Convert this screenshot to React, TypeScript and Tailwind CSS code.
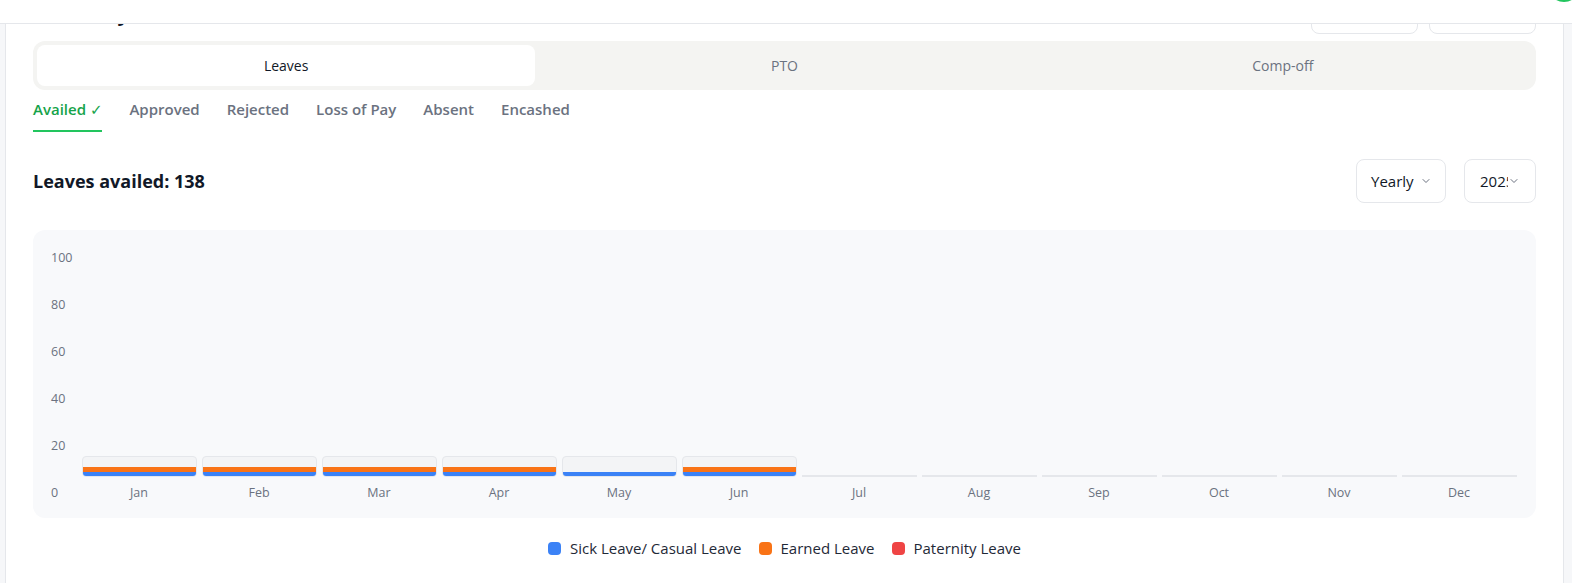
import React from "react";

const FONT = { fontFamily: '"Open Sans", "Noto Sans", "Liberation Sans", sans-serif' };

const months = [
  { m: "Jan", o: true, b: true },
  { m: "Feb", o: true, b: true },
  { m: "Mar", o: true, b: true },
  { m: "Apr", o: true, b: true },
  { m: "May", o: false, b: true },
  { m: "Jun", o: true, b: true },
  { m: "Jul", o: false, b: false },
  { m: "Aug", o: false, b: false },
  { m: "Sep", o: false, b: false },
  { m: "Oct", o: false, b: false },
  { m: "Nov", o: false, b: false },
  { m: "Dec", o: false, b: false },
];

function Chevron() {
  return (
    <svg width="12" height="12" viewBox="0 0 24 24" fill="none" stroke="#6b7280" strokeWidth="2" strokeLinecap="round" strokeLinejoin="round">
      <path d="m6 9 6 6 6-6" />
    </svg>
  );
}

export default function App() {
  return (
    <div className="w-[1572px] h-[583px] bg-white flex flex-col overflow-hidden text-[#111827]" style={FONT}>
      <header className="relative h-[24px] shrink-0 border-b border-[#e5e7eb] bg-white z-10">
        <div className="absolute right-[-8px] top-[-30px] w-[32px] h-[32px] rounded-full bg-[#22c55e]" />
      </header>
      <div className="flex flex-1 min-h-0">
        <div className="w-[6px] shrink-0 bg-[#f6f7f9] border-r border-[#e5e7eb]" />
        <main className="flex-1 min-w-0 overflow-hidden px-[27px]">
          <div className="-mt-[30px] h-10 flex items-center justify-between">
            <h1 className="text-[20px] font-bold leading-8">Summary</h1>
            <div className="flex gap-[11px]">
              <button className="w-[107px] h-10 rounded-lg border border-[#e5e7eb] bg-white" />
              <button className="w-[107px] h-10 rounded-lg border border-[#e5e7eb] bg-white" />
            </div>
          </div>

          <div className="mt-[7px] h-[49px] rounded-xl bg-[#f4f4f2] p-1 grid grid-cols-3">
            <div className="rounded-lg bg-white flex items-center justify-center text-[14px] text-[#111827]">Leaves</div>
            <div className="flex items-center justify-center text-[14px] text-[#6b7280]">PTO</div>
            <div className="flex items-center justify-center text-[14px] text-[#6b7280]">Comp-off</div>
          </div>

          <div className="mt-2 flex gap-[27px] text-[15px] font-semibold leading-[22px]">
            <div className="pb-[9px] border-b-2 border-[#22c55e] text-[#16a34a]">
              Availed <span className="font-normal text-[15px]" style={{ fontFamily: '"DejaVu Sans", sans-serif' }}>✓</span>
            </div>
            <div className="pb-[9px] text-[#6b7280]">Approved</div>
            <div className="pb-[9px] text-[#6b7280]">Rejected</div>
            <div className="pb-[9px] text-[#6b7280]">Loss of Pay</div>
            <div className="pb-[9px] text-[#6b7280]">Absent</div>
            <div className="pb-[9px] text-[#6b7280]">Encashed</div>
          </div>

          <div className="mt-[27px] flex items-center justify-between">
            <div className="text-[18px] font-bold">Leaves availed: 138</div>
            <div className="flex gap-[18px]">
              <div className="h-[44px] w-[90px] rounded-lg border border-[#e5e7eb] flex items-center pl-[14px] gap-[6px] text-[15px]">
                <span>Yearly</span>
                <Chevron />
              </div>
              <div className="h-[44px] w-[72px] rounded-lg border border-[#e5e7eb] flex items-center pl-[15px] text-[15px]">
                <span className="w-[28px] overflow-hidden whitespace-nowrap">2025</span>
                <Chevron />
              </div>
            </div>
          </div>

          <div className="mt-[27px] h-[288px] rounded-xl bg-[#f8f9fb] flex pt-[20px] pb-[17px] pl-[18px] pr-[17px]">
            <div className="w-[28px] shrink-0 flex flex-col justify-between text-[12.5px] leading-4 text-[#6b7280]">
              <span>100</span>
              <span>80</span>
              <span>60</span>
              <span>40</span>
              <span>20</span>
              <span>0</span>
            </div>
            <div className="flex-1 flex flex-col">
              <div className="flex-1 flex items-end">
                {months.map((d) => (
                  <div key={d.m} className="flex-1 px-[2.5px] flex flex-col justify-end">
                    {d.b ? (
                      <div className="h-[21px] rounded-[4px] border border-[#e5e7eb] bg-[#f3f4f6] overflow-hidden flex flex-col justify-end">
                        {d.o && <div className="h-[5px] bg-[#f97316]" />}
                        <div className="h-[4px] bg-[#3b82f6]" />
                      </div>
                    ) : (
                      <div className="h-[2px] bg-[#e5e7eb]" />
                    )}
                  </div>
                ))}
              </div>
              <div className="mt-2 flex h-4">
                {months.map((d) => (
                  <div key={d.m} className="flex-1 text-center text-[12.5px] leading-4 text-[#6b7280]">{d.m}</div>
                ))}
              </div>
            </div>
          </div>

          <div className="mt-5 flex justify-center items-center gap-[17px] text-[15px] leading-5 text-[#1f2937]">
            <div className="flex items-center gap-[9px]">
              <span className="w-[13px] h-[13px] rounded-[4px] bg-[#3b82f6]" />
              <span>Sick Leave/ Casual Leave</span>
            </div>
            <div className="flex items-center gap-[9px]">
              <span className="w-[13px] h-[13px] rounded-[4px] bg-[#f97316]" />
              <span>Earned Leave</span>
            </div>
            <div className="flex items-center gap-[9px]">
              <span className="w-[13px] h-[13px] rounded-[4px] bg-[#ef4444]" />
              <span>Paternity Leave</span>
            </div>
          </div>
        </main>
        <div className="w-[9px] shrink-0 bg-[#f6f7f9] border-l border-[#e5e7eb]" />
      </div>
    </div>
  );
}
